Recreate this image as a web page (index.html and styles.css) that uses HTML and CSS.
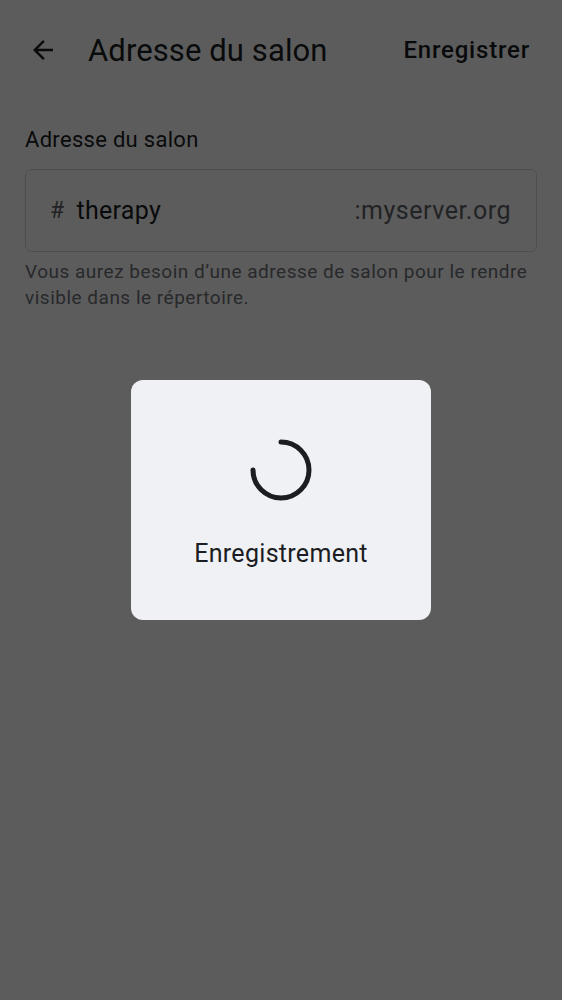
FILE: index.html
```html
<!DOCTYPE html>
<html lang="fr">
<head>
<meta charset="utf-8">
<link rel="stylesheet" href="styles.css">
</head>
<body>
<div class="page">
  <header class="topbar">
    <button class="back" aria-label="Retour">
      <svg width="30" height="30" viewBox="0 0 24 24"><path d="M20 11H7.83l5.59-5.59L12 4l-8 8 8 8 1.41-1.41L7.83 13H20v-2z" fill="#1b1d22"/></svg>
    </button>
    <h1 class="title">Adresse du salon</h1>
    <span class="action">Enregistrer</span>
  </header>
  <main class="content">
    <div class="label">Adresse du salon</div>
    <div class="field">
      <span class="hash">#</span>
      <span class="value">therapy</span>
      <span class="suffix">:myserver.org</span>
    </div>
    <p class="help">Vous aurez besoin d’une adresse de salon pour le rendre visible dans le répertoire.</p>
  </main>
</div>
<div class="scrim">
  <div class="dialog">
    <svg class="spinner" width="66" height="66" viewBox="0 0 66 66">
      <path d="M33 5 A28 28 0 1 1 5 33" fill="none" stroke="#1b1d22" stroke-width="5" stroke-linecap="round"/>
    </svg>
    <div class="dlg-text">Enregistrement</div>
  </div>
</div>
</body>
</html>
```
FILE: styles.css
```css
* { box-sizing: border-box; }
html, body { margin: 0; padding: 0; }
body {
  width: 562px;
  height: 1000px;
  background: #ffffff;
  font-family: Roboto, "Noto Sans", sans-serif;
  color: #1b1d22;
  position: relative;
  overflow: hidden;
}
.page { height: 1000px; }
.topbar {
  height: 100px;
  display: flex;
  align-items: center;
  padding: 0 32px 0 28px;
}
.back {
  background: none;
  border: 0;
  padding: 0;
  width: 30px;
  height: 30px;
  display: flex;
  margin-right: 30px;
}
.title {
  margin: 0;
  font-size: 31px;
  font-weight: 400;
  flex: 1;
  letter-spacing: 0.1px;
}
.action {
  font-size: 24px;
  font-weight: 500;
  letter-spacing: 0.8px;
}
.content { padding: 23px 25px 0 25px; }
.label {
  font-size: 22px;
  line-height: 34px;
  letter-spacing: 0.3px;
  margin-bottom: 12px;
}
.field {
  height: 83px;
  border: 1.5px solid #d8d9de;
  border-radius: 6px;
  display: flex;
  align-items: center;
  padding: 0 25px 0 24px;
  font-size: 25px;
  letter-spacing: 0.3px;
}
.hash { color: #5f6168; font-size: 23px; margin-right: 12px; }
.value { flex: 1; }
.suffix { color: #5f6168; letter-spacing: 0.5px; }
.help {
  margin: 7px 0 0 0;
  font-size: 19px;
  line-height: 26px;
  color: #6f7177;
  letter-spacing: 0.5px;
}
.scrim {
  position: absolute;
  inset: 0;
  background: rgba(0, 0, 0, 0.64);
  display: flex;
  align-items: center;
  justify-content: center;
}
.dialog {
  width: 300px;
  height: 240px;
  background: #f0f1f5;
  border-radius: 12px;
  display: flex;
  flex-direction: column;
  align-items: center;
  padding-top: 57px;
}
.spinner { display: block; }
.dlg-text {
  margin-top: 36px;
  font-size: 25px;
  letter-spacing: 0.3px;
}
```
